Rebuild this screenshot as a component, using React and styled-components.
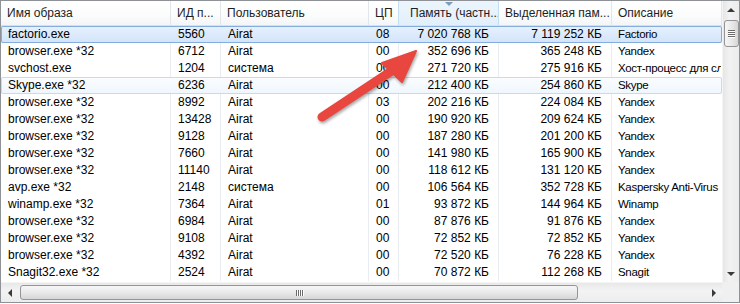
import React from 'react';
import styled, { createGlobalStyle, css } from 'styled-components';

const GlobalStyle = createGlobalStyle`
  html, body {
    margin: 0;
    padding: 0;
    background: #fff;
  }
  body {
    font-family: "Liberation Sans", Arial, sans-serif;
    font-size: 12px;
    color: #000;
  }
`;

// Columns of the process list
const columns = [
  { key: 'name', title: 'Имя образа', width: 170 },
  { key: 'pid', title: 'ИД п...', width: 50 },
  { key: 'user', title: 'Пользователь', width: 148 },
  { key: 'cpu', title: 'ЦП', width: 30 },
  { key: 'mem', title: 'Память (частн...', width: 100, right: true, sorted: true },
  { key: 'commit', title: 'Выделенная пам...', width: 113, right: true },
  { key: 'desc', title: 'Описание', width: 110, tight: true },
];

const rows = [
  ['factorio.exe', '5560', 'Airat', '08', '7 020 768 КБ', '7 119 252 КБ', 'Factorio', 'selected'],
  ['browser.exe *32', '6712', 'Airat', '00', '352 696 КБ', '365 248 КБ', 'Yandex'],
  ['svchost.exe', '1204', 'система', '00', '271 720 КБ', '275 916 КБ', 'Хост-процесс для служб Windows'],
  ['Skype.exe *32', '6236', 'Airat', '00', '212 400 КБ', '254 860 КБ', 'Skype', 'hot'],
  ['browser.exe *32', '8992', 'Airat', '03', '202 216 КБ', '224 084 КБ', 'Yandex'],
  ['browser.exe *32', '13428', 'Airat', '00', '190 920 КБ', '209 624 КБ', 'Yandex'],
  ['browser.exe *32', '9128', 'Airat', '00', '187 280 КБ', '201 200 КБ', 'Yandex'],
  ['browser.exe *32', '7660', 'Airat', '00', '141 980 КБ', '165 900 КБ', 'Yandex'],
  ['browser.exe *32', '11140', 'Airat', '00', '118 612 КБ', '131 120 КБ', 'Yandex'],
  ['avp.exe *32', '2148', 'система', '00', '106 564 КБ', '352 728 КБ', 'Kaspersky Anti-Virus'],
  ['winamp.exe *32', '7364', 'Airat', '01', '93 872 КБ', '144 964 КБ', 'Winamp'],
  ['browser.exe *32', '6984', 'Airat', '00', '87 876 КБ', '91 876 КБ', 'Yandex'],
  ['browser.exe *32', '9108', 'Airat', '00', '72 852 КБ', '72 852 КБ', 'Yandex'],
  ['browser.exe *32', '4392', 'Airat', '00', '72 520 КБ', '76 228 КБ', 'Yandex'],
  ['Snagit32.exe *32', '2524', 'Airat', '00', '70 872 КБ', '112 268 КБ', 'Snagit'],
];

const Frame = styled.div`
  position: relative;
  width: 740px;
  height: 303px;
  box-sizing: border-box;
  border: 1px solid #8e9297;
  display: grid;
  grid-template-columns: 721px 17px;
  grid-template-rows: 281px 20px;
  overflow: hidden;
`;

const ListArea = styled.div`
  display: flex;
  flex-direction: column;
  overflow: hidden;
`;

const HeaderRow = styled.div`
  display: flex;
  height: 25px;
  flex: none;
  background: linear-gradient(#ffffff, #fbfcfc 60%, #f4f5f6);
  border-bottom: 1px solid #dcdfe3;
  box-sizing: border-box;
`;

const HeaderCell = styled.div`
  position: relative;
  flex: none;
  width: ${p => p.$width}px;
  box-sizing: border-box;
  padding: 0 6px;
  line-height: 24px;
  color: #1e1e1e;
  white-space: nowrap;
  overflow: hidden;
  border-right: 1px solid #e2e5e9;

  ${p => p.$sorted && css`
    background: linear-gradient(#ecf5fd, #e2f0fb);
    border-left: 1px solid #c3ddf2;
    border-right: 1px solid #c3ddf2;
    margin-left: -1px;
    width: ${p.$width + 1}px;
    padding-left: 11px;
  `}
`;

const SortMark = styled.span`
  position: absolute;
  top: 1px;
  left: 46px;
  width: 0;
  height: 0;
  border-left: 4px solid transparent;
  border-right: 4px solid transparent;
  border-top: 4px solid #7d9bbd;
`;

const Row = styled.div`
  display: flex;
  height: 17px;
  flex: none;
  border-radius: 2px;

  ${p => p.$state === 'selected' && css`
    background: linear-gradient(#e6f1fd, #d2e4fa);
    box-shadow: inset 0 0 0 1px #84acdd;
  `}

  ${p => p.$state === 'hot' && css`
    background: linear-gradient(#fbfdff, #eff6fe);
    box-shadow: inset 0 0 0 1px #c2dcf7;
  `}
`;

const Cell = styled.div`
  flex: none;
  width: ${p => p.$width}px;
  box-sizing: border-box;
  padding: ${p => (p.$right ? '0 9px 0 4px' : '0 6px 0 7px')};
  text-align: ${p => (p.$right ? 'right' : 'left')};
  line-height: 17px;
  white-space: nowrap;
  overflow: hidden;
  border-right: 1px solid ${p => (p.$plain ? 'transparent' : '#e9edf2')};

  ${p => p.$tight && css`
    padding: 0 0 0 6px;
    font-size: 11.5px;
    letter-spacing: -0.3px;
  `}

  &:last-child {
    border-right-color: transparent;
  }
`;

const VScroll = styled.div`
  display: flex;
  flex-direction: column;
  align-items: center;
  background: linear-gradient(90deg, #e6e6e6, #f2f2f2 40%, #ececec);
  border-left: 1px solid #f4f4f4;
`;

const HScroll = styled.div`
  display: flex;
  align-items: center;
  background: linear-gradient(#e8e8e8, #f3f3f3 40%, #ededed);
  border-top: 1px solid #f4f4f4;
`;

const Corner = styled.div`
  background: #f0f0f0;
`;

const ArrowBtn = styled.div`
  flex: none;
  width: 17px;
  height: ${p => (p.$vertical ? '17px' : '19px')};
  display: flex;
  align-items: center;
  justify-content: center;
`;

const Glyph = styled.span`
  width: 0;
  height: 0;
  ${p => p.$dir === 'up' && css`
    border-left: 4px solid transparent;
    border-right: 4px solid transparent;
    border-bottom: 4px solid #3a3a3a;
  `}
  ${p => p.$dir === 'down' && css`
    border-left: 4px solid transparent;
    border-right: 4px solid transparent;
    border-top: 4px solid #3a3a3a;
  `}
  ${p => p.$dir === 'left' && css`
    border-top: 4px solid transparent;
    border-bottom: 4px solid transparent;
    border-right: 4px solid #3a3a3a;
  `}
  ${p => p.$dir === 'right' && css`
    border-top: 4px solid transparent;
    border-bottom: 4px solid transparent;
    border-left: 4px solid #3a3a3a;
  `}
`;

const Track = styled.div`
  flex: 1;
  display: flex;
  flex-direction: ${p => (p.$vertical ? 'column' : 'row')};
  align-self: stretch;
  align-items: center;
`;

const Thumb = styled.div`
  flex: none;
  box-sizing: border-box;
  border: 1px solid #959595;
  border-radius: 3px;
  display: flex;
  align-items: center;
  justify-content: center;
  ${p => p.$vertical
    ? css`
      width: 15px;
      height: 27px;
      margin-top: 2px;
      background: linear-gradient(90deg, #f6f6f6, #e9e9e9 50%, #d6d6d6);
      flex-direction: column;
      gap: 1px;
    `
    : css`
      width: 558px;
      height: 15px;
      margin-left: 2px;
      background: linear-gradient(#f6f6f6, #e9e9e9 50%, #d6d6d6);
      gap: 1px;
    `}
`;

const Grip = styled.span`
  background: #6b6b6b;
  ${p => p.$vertical
    ? css`width: 7px; height: 1px; box-shadow: 0 1px 0 #fff;`
    : css`width: 1px; height: 6px; box-shadow: 1px 0 0 #fff;`}
`;

const ArrowMark = styled.svg`
  position: absolute;
  left: 0;
  top: 0;
  width: 740px;
  height: 303px;
  pointer-events: none;
  filter: drop-shadow(1px 2px 1.5px rgba(0, 0, 0, 0.35));
`;

const Grips = ({ vertical }) => (
  <>
    <Grip $vertical={vertical} />
    <Grip $vertical={vertical} />
    <Grip $vertical={vertical} />
    <Grip $vertical={vertical} />
  </>
);

export default function App() {
  return (
    <>
      <GlobalStyle />
      <Frame>
        <ListArea>
          <HeaderRow>
            {columns.map(col => (
              <HeaderCell key={col.key} $width={col.width} $sorted={col.sorted}>
                {col.sorted && <SortMark />}
                {col.title}
              </HeaderCell>
            ))}
          </HeaderRow>
          {rows.map((row, i) => (
            <Row key={i} $state={row[7]}>
              {columns.map((col, c) => (
                <Cell
                  key={col.key}
                  $width={col.width}
                  $right={col.right}
                  $tight={col.tight}
                  $plain={!!row[7]}
                >
                  {row[c]}
                </Cell>
              ))}
            </Row>
          ))}
        </ListArea>
        <VScroll>
          <ArrowBtn $vertical><Glyph $dir="up" /></ArrowBtn>
          <Track $vertical>
            <Thumb $vertical><Grips vertical /></Thumb>
          </Track>
          <ArrowBtn $vertical><Glyph $dir="down" /></ArrowBtn>
        </VScroll>
        <HScroll>
          <ArrowBtn><Glyph $dir="left" /></ArrowBtn>
          <Track>
            <Thumb><Grips /></Thumb>
          </Track>
          <ArrowBtn><Glyph $dir="right" /></ArrowBtn>
        </HScroll>
        <Corner />
        <ArrowMark viewBox="0 0 740 303">
          <line x1="321" y1="116" x2="392" y2="69" stroke="#e8463e" strokeWidth="9" strokeLinecap="round" />
          <polygon points="415,50 381,62 401,81" fill="#e8463e" stroke="#e8463e" strokeWidth="2" strokeLinejoin="round" />
        </ArrowMark>
      </Frame>
    </>
  );
}
